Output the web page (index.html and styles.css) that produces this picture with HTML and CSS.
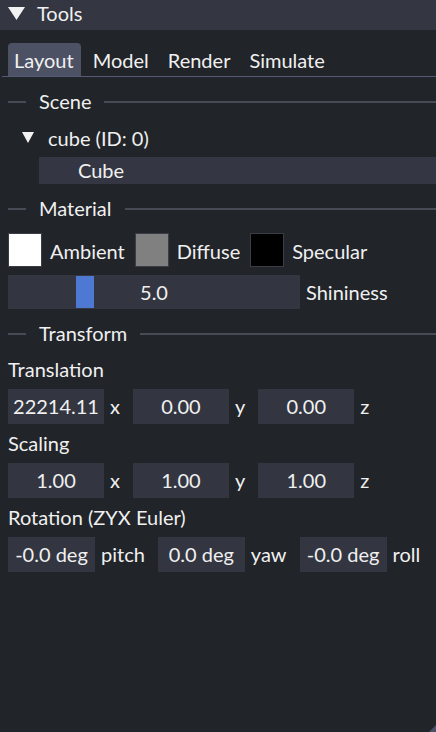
FILE: index.html
```html
<!DOCTYPE html>
<html>
<head>
<meta charset="utf-8">
<link rel="stylesheet" href="styles.css">
</head>
<body>
<div class="window">
  <div class="titlebar">
    <svg class="title-arrow" width="17" height="13" viewBox="0 0 17 13"><polygon points="0,0 17,0 8.5,13" fill="#f2f2f2"/></svg>
    <span class="title-text">Tools</span>
  </div>
  <div class="panel">
    <div class="tabbar">
      <div class="tab active">Layout</div>
      <div class="tab">Model</div>
      <div class="tab">Render</div>
      <div class="tab">Simulate</div>
    </div>

    <div class="sep sep-scene"><span class="sep-lead"></span><span class="sep-text">Scene</span><span class="sep-rest"></span></div>

    <div class="tree-node">
      <svg class="tree-arrow" width="12" height="11" viewBox="0 0 12 11"><polygon points="0,0 12,0 6,11" fill="#f2f2f2"/></svg>
      <span>cube (ID: 0)</span>
    </div>
    <div class="selectable">Cube</div>

    <div class="sep sep-material"><span class="sep-lead"></span><span class="sep-text">Material</span><span class="sep-rest"></span></div>

    <div class="colors">
      <span class="swatch swatch-white"></span><span class="swatch-label">Ambient</span>
      <span class="swatch swatch-gray"></span><span class="swatch-label">Diffuse</span>
      <span class="swatch swatch-black"></span><span class="swatch-label">Specular</span>
    </div>

    <div class="slider-row">
      <div class="slider"><span class="grab"></span><span class="slider-value">5.0</span></div>
      <span class="slider-label">Shininess</span>
    </div>

    <div class="sep sep-transform"><span class="sep-lead"></span><span class="sep-text">Transform</span><span class="sep-rest"></span></div>

    <div class="label label-first">Translation</div>
    <div class="fields">
      <span class="field">22214.11</span><span class="axis">x</span>
      <span class="field">0.00</span><span class="axis">y</span>
      <span class="field">0.00</span><span class="axis">z</span>
    </div>

    <div class="label">Scaling</div>
    <div class="fields">
      <span class="field">1.00</span><span class="axis">x</span>
      <span class="field">1.00</span><span class="axis">y</span>
      <span class="field">1.00</span><span class="axis">z</span>
    </div>

    <div class="label">Rotation (ZYX Euler)</div>
    <div class="fields fields-rot">
      <span class="field">-0.0 deg</span><span class="axis">pitch</span>
      <span class="field">0.0 deg</span><span class="axis">yaw</span>
      <span class="field">-0.0 deg</span><span class="axis">roll</span>
    </div>
  </div>
  <span class="grip"></span>
</div>
</body>
</html>
```

FILE: styles.css
```css
* { box-sizing: border-box; }

html, body {
  margin: 0;
  padding: 0;
  background: #212429;
}

body {
  font-family: Lato, "Noto Sans", sans-serif;
  font-size: 20px;
  color: #f0f0f0;
  width: 436px;
  height: 732px;
  overflow: hidden;
}

.window {
  position: relative;
  width: 436px;
  height: 732px;
  background: #212429;
}

.titlebar {
  height: 30px;
  background: #343741;
  display: flex;
  align-items: flex-start;
  padding-left: 8px;
}

.title-arrow {
  margin-top: 7px;
  flex: none;
}

.title-text {
  margin-left: 12px;
  line-height: 26px;
}

.panel {
  padding: 13px 0 0 8px;
}

.tabbar {
  display: flex;
  gap: 6px;
  margin-left: -6px;
  padding-left: 6px;
  height: 34px;
  border-bottom: 1px solid #555a77;
}

.tab {
  height: 33px;
  padding: 2px 7px 0 6px;
  line-height: 30px;
  border-radius: 4px 4px 0 0;
}

.tab.active {
  background: #4c5164;
}

.sep {
  display: flex;
  align-items: center;
  height: 23px;
}

.sep-scene { margin-top: 13px; }
.sep-material { margin-top: 13px; }
.sep-transform { margin-top: 13px; }

.sep-lead {
  width: 18px;
  height: 2px;
  background: #484b55;
  flex: none;
}

.sep-text {
  margin: 0 13px;
  line-height: 21px;
  padding-bottom: 1px;
}

.sep-rest {
  flex: 1;
  height: 2px;
  background: #484b55;
}

.tree-node {
  margin-top: 14px;
  height: 23px;
  display: flex;
  align-items: center;
  padding-left: 14px;
  line-height: 21px;
}

.tree-node span {
  padding-bottom: 1px;
}

.tree-arrow {
  flex: none;
  margin-right: 14px;
  margin-top: -2px;
}

.selectable {
  margin-top: 7px;
  margin-left: 31px;
  height: 27px;
  line-height: 26px;
  padding-left: 39px;
  background: #343743;
}

.colors {
  margin-top: 13px;
  height: 34px;
  display: flex;
  align-items: flex-start;
}

.swatch {
  width: 34px;
  height: 34px;
  border: 1px solid #3a3d46;
  flex: none;
}

.swatch-white { background: #ffffff; }
.swatch-gray { background: #808080; }
.swatch-black { background: #000000; }

.swatch-label {
  margin: 0 10px 0 8px;
  padding-top: 2px;
  line-height: 32px;
}

.slider-row {
  margin-top: 8px;
  height: 34px;
  display: flex;
}

.slider {
  position: relative;
  width: 292px;
  height: 34px;
  background: #333640;
  text-align: center;
  line-height: 34px;
}

.grab {
  position: absolute;
  left: 68px;
  top: 1px;
  width: 18px;
  height: 32px;
  background: #4e79d2;
}

.slider-value {
  position: relative;
}

.slider-label {
  margin-left: 6px;
  line-height: 34px;
}

.label {
  margin-top: 9px;
  height: 23px;
  line-height: 21px;
}

.label-first {
  margin-top: 14px;
}

.fields {
  margin-top: 7px;
  height: 35px;
  display: flex;
}

.field {
  width: 96px;
  height: 35px;
  background: #333641;
  text-align: center;
  line-height: 35px;
  flex: none;
}

.fields-rot .field {
  width: 87px;
}

.axis {
  margin: 0 13px 0 6px;
  line-height: 35px;
}

.grip {
  position: absolute;
  right: 0;
  bottom: 0;
  width: 0;
  height: 0;
  border-left: 7px solid transparent;
  border-bottom: 7px solid #4a5068;
}
```
